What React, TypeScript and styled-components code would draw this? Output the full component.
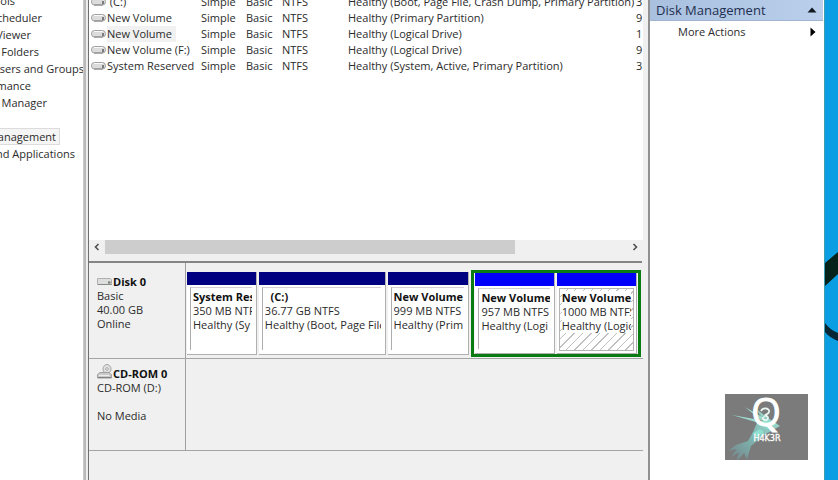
import React from "react";
import styled, { createGlobalStyle, css } from "styled-components";

const Global = createGlobalStyle`
  * { box-sizing: border-box; }
  html, body, #root { height: 100%; }
  body {
    margin: 0;
    overflow: hidden;
    background: #f0f0f0;
    color: #2b2b2b;
    font: 11px/14px "Open Sans", "Noto Sans", sans-serif;
  }
  button { font: inherit; color: inherit; background: none; border: 0; padding: 0; margin: 0; text-align: left; }
`;

const Screen = styled.div`
  display: flex;
  height: 100vh;
  min-height: 480px;
`;

const Tree = styled.nav`
  flex: 0 0 84px;
  display: flex;
  flex-direction: column;
  background: #fff;
  overflow: hidden;
  border-right: 1px solid #c9c9c9;
  white-space: nowrap;
`;

const TreeItem = styled.button<{ $end: number; $first?: boolean; $selected?: boolean }>`
  display: flex;
  flex: none;
  align-items: ${(p) => (p.$first ? "flex-end" : "center")};
  justify-content: flex-end;
  width: ${(p) => p.$end}px;
  height: ${(p) => (p.$first ? 9 : 17)}px;
  line-height: 16px;
  white-space: nowrap;
  ${(p) =>
    p.$selected &&
    css`
      padding-right: 3px;
      background: #f5f5f5;
      border: 1px solid #dcdcdc;
      border-left: 0;
    `}
`;

const Splitter = styled.div`
  flex: 0 0 5px;
  background: #ececec;
  border-left: 2px solid #b9b9b9;
  border-right: 1px solid #707070;
`;

const Center = styled.main`
  flex: 1 1 0;
  min-width: 0;
  display: flex;
  flex-direction: column;
  padding-right: 5px;
`;

const VolumeList = styled.section`
  flex: 0 0 240px;
  background: #fff;
  overflow: hidden;
  display: flex;
  flex-direction: column;
`;

const VolumeTable = styled.table`
  width: 100%;
  table-layout: fixed;
  border-collapse: collapse;
  margin-top: -6px;
  td {
    height: 16px;
    padding: 0;
    line-height: 16px;
    white-space: nowrap;
    overflow: hidden;
  }
`;

const Col = styled.col<{ $w?: number }>`
  ${(p) => p.$w && `width: ${p.$w}px;`}
`;

const VolumeName = styled.span<{ $selected?: boolean }>`
  display: flex;
  align-items: center;
  gap: 1px;
  padding-left: 2px;
  white-space: pre;
  span {
    padding-right: 4px;
    background: ${(p) => (p.$selected ? "#f1f1f1" : "transparent")};
  }
`;

const ScrollBar = styled.div`
  flex: 0 0 14px;
  display: flex;
  background: #f0f0f0;
`;

const ScrollButton = styled.button`
  flex: 0 0 16px;
  display: flex;
  align-items: center;
  justify-content: center;
`;

const Track = styled.div`
  flex: 1;
`;

const Thumb = styled.div`
  width: 78.5%;
  height: 14px;
  background: #cdcdcd;
`;

const Divider = styled.div`
  flex: 0 0 9px;
  margin-right: 1px;
  border-bottom: 2px solid #858585;
`;

const DiskRow = styled.section<{ $h: number }>`
  display: flex;
  flex: 0 0 ${(p) => p.$h}px;
  border-bottom: 1px solid #a5a5a5;
`;

const DiskLabel = styled.div`
  flex: 0 0 97px;
  border-right: 1px solid #a0a0a0;
  padding: 0 8px 27px;
  display: flex;
  flex-direction: column;
  justify-content: flex-end;
  white-space: pre;
`;

const DiskTitle = styled.strong`
  display: flex;
  align-items: flex-end;
  gap: 1px;
  height: 16px;
  color: #111;
  svg { margin-bottom: 2px; }
`;

const Partitions = styled.div`
  flex: 1;
  min-width: 0;
  display: flex;
  align-items: stretch;
  gap: 2px;
  padding: 7px 2px 1px 1px;
`;

const Extended = styled.div`
  flex: 162 1 0;
  min-width: 0;
  display: flex;
  gap: 2px;
  border: 3px solid #0a7a12;
  padding: 0 1px;
  background: #f4f4f4;
`;

const Part = styled.div<{ $grow: number; $primary?: boolean }>`
  flex: ${(p) => p.$grow} 1 0;
  min-width: 0;
  display: flex;
  flex-direction: column;
  border-right: 1px solid #b0b0b0;
  border-bottom: 1px solid #b0b0b0;
  margin: ${(p) => (p.$primary ? "2px 0" : "0")};
  background: #fff;
`;

const Band = styled.div<{ $primary?: boolean }>`
  flex: 0 0 13px;
  background: ${(p) => (p.$primary ? "#000080" : "#0000fa")};
`;

const Body = styled.div<{ $hatched?: boolean }>`
  flex: 1;
  margin: 2px 4px 4px 3px;
  padding: 2px 0 0 2px;
  border-left: 1px solid #adadad;
  border-top: 1px solid #d0d0d0;
  overflow: hidden;
  white-space: pre;
  ${(p) =>
    p.$hatched &&
    css`
      margin: 2px 2px 2px 2px;
      border: 1px solid #b4b4b4;
      background: repeating-linear-gradient(135deg, #fff 0 5px, #c0c0c0 5px 6px);
    `}
  strong, span {
    display: block;
    overflow: hidden;
    margin-right: ${(p) => (p.$hatched ? 2 : 0)}px;
    background: #fff;
  }
  strong { color: #111; }
`;

const Actions = styled.aside`
  flex: 0 0 176px;
  background: #fff;
  border-left: 2px solid #919191;
  display: flex;
  flex-direction: column;
`;

const ActionsHeader = styled.button`
  display: flex;
  align-items: center;
  justify-content: space-between;
  height: 21px;
  margin-right: 1px;
  padding: 0 6px 0 6px;
  font-size: 13px;
  line-height: 20px;
  color: #1e2f50;
  background: linear-gradient(90deg, #a9c0df, #b9cfeb);
  border-bottom: 1px solid #a2b6d2;
`;

const ActionItem = styled.button`
  display: flex;
  align-items: center;
  justify-content: space-between;
  height: 22px;
  padding: 0 8px 0 28px;
`;

const Watermark = styled.div`
  margin: auto 16px 20px auto;
  width: 83px;
  height: 66px;
  svg { display: block; }
`;

const Desktop = styled.div`
  flex: 0 0 14px;
  background: #0b9ee3;
  border-left: 1px solid #3b9dad;
  padding-top: 248px;
  svg { display: block; }
`;

const DriveIcon = () => (
  <svg width="15" height="10" viewBox="0 0 15 10" aria-hidden="true">
    <rect x="0.500" y="1.500" width="14" height="6.500" rx="3" fill="#dcdcdc" stroke="#a2a2a2" />
    <path d="M3 2.500h9" stroke="#f7f7f7" />
    <path d="M3 8h9" stroke="#858585" />
    <rect x="11" y="4" width="2" height="3" fill="#7c7c7c" />
  </svg>
);

const DiskIcon = () => (
  <svg width="15" height="10" viewBox="0 0 15 10" aria-hidden="true">
    <path d="M.5 1.500h13l1 1v5H.5z" fill="#dedede" stroke="#b0b0b0" />
    <path d="M1 7.500h13.500" stroke="#888" />
    <path d="M11 5.500h2.500" stroke="#6c7a6c" strokeWidth="2" />
  </svg>
);

const CdIcon = () => (
  <svg width="15" height="15" viewBox="0 0 15 15" aria-hidden="true">
    <ellipse cx="10" cy="5" rx="4" ry="4.500" fill="#e0e0e0" stroke="#a4a4a4" />
    <circle cx="10" cy="5" r="1.300" fill="#fff" stroke="#a4a4a4" />
    <path d="M3 8.500h9l2.500 2v3.500H.5v-3.500z" fill="#cbcbcb" stroke="#a0a0a0" />
    <path d="M2 11.500h10" stroke="#ededed" />
    <path d="M1 13.500h13" stroke="#808080" />
  </svg>
);

const Chevron = ({ d }: { d: string }) => (
  <svg width="8" height="8" viewBox="0 0 8 8" aria-hidden="true">
    <path d={d} fill="none" stroke="#505050" strokeWidth="1.600" />
  </svg>
);

const treeItems = [
  { label: "ols", end: 15 },
  { label: "cheduler", end: 42 },
  { label: "Viewer", end: 31 },
  { label: "l Folders", end: 39 },
  { label: "Users and Groups", end: 84 },
  { label: "mance", end: 31 },
  { label: "Manager", end: 47 },
  { label: "", end: 47 },
  { label: "anagement", end: 60, selected: true },
  { label: "nd Applications", end: 75 },
];

const volumes = [
  { name: " (C:)", status: "Healthy (Boot, Page File, Crash Dump, Primary Partition)", size: "3" },
  { name: "New Volume", status: "Healthy (Primary Partition)", size: "9" },
  { name: "New Volume", status: "Healthy (Logical Drive)", size: "1", selected: true },
  { name: "New Volume (F:)", status: "Healthy (Logical Drive)", size: "9" },
  { name: "System Reserved", status: "Healthy (System, Active, Primary Partition)", size: "3" },
];

type PartitionProps = {
  grow: number;
  name: string;
  size: string;
  status: string;
  primary?: boolean;
  hatched?: boolean;
};

const Partition = ({ grow, name, size, status, primary, hatched }: PartitionProps) => (
  <Part $grow={grow} $primary={primary}>
    <Band $primary={primary} />
    <Body $hatched={hatched}>
      <strong>{name}</strong>
      <span>{size}</span>
      <span>{status}</span>
    </Body>
  </Part>
);

export default function App() {
  return (
    <Screen>
      <Global />
      <Tree aria-label="Console tree">
        {treeItems.map((t, i) => (
          <TreeItem key={i} $end={t.end} $first={i === 0} $selected={t.selected}>
            {t.label}
          </TreeItem>
        ))}
      </Tree>
      <Splitter />
      <Center>
        <VolumeList>
          <VolumeTable>
            <colgroup>
              <Col $w={112} />
              <Col $w={45} />
              <Col $w={36} />
              <Col $w={66} />
              <Col />
              <Col $w={7} />
            </colgroup>
            <tbody>
              {volumes.map((v, i) => (
                <tr key={i}>
                  <td>
                    <VolumeName $selected={v.selected}>
                      <DriveIcon />
                      <span>{v.name}</span>
                    </VolumeName>
                  </td>
                  <td>Simple</td>
                  <td>Basic</td>
                  <td>NTFS</td>
                  <td>{v.status}</td>
                  <td>{v.size}</td>
                </tr>
              ))}
            </tbody>
          </VolumeTable>
        </VolumeList>
        <ScrollBar>
          <ScrollButton aria-label="Scroll left">
            <Chevron d="M5.500 1L2.500 4l3 3" />
          </ScrollButton>
          <Track>
            <Thumb />
          </Track>
          <ScrollButton aria-label="Scroll right">
            <Chevron d="M2.500 1l3 3-3 3" />
          </ScrollButton>
        </ScrollBar>
        <Divider />
        <DiskRow $h={96}>
          <DiskLabel>
            <DiskTitle>
              <DiskIcon />
              Disk 0
            </DiskTitle>
            <span>Basic</span>
            <span>40.00 GB</span>
            <span>Online</span>
          </DiskLabel>
          <Partitions>
            <Partition primary grow={69} name="System Res" size="350 MB NTF" status="Healthy (Sy" />
            <Partition primary grow={126} name="  (C:)" size="36.77 GB NTFS" status="Healthy (Boot, Page File" />
            <Partition primary grow={81} name="New Volume" size="999 MB NTFS" status="Healthy (Prim" />
            <Extended>
              <Partition grow={79} name="New Volume" size="957 MB NTFS" status="Healthy (Logi" />
              <Partition grow={80} hatched name="New Volume" size="1000 MB NTFS" status="Healthy (Logic" />
            </Extended>
          </Partitions>
        </DiskRow>
        <DiskRow $h={92}>
          <DiskLabel>
            <DiskTitle>
              <CdIcon />
              CD-ROM 0
            </DiskTitle>
            <span>CD-ROM (D:)</span>
            <span> </span>
            <span>No Media</span>
          </DiskLabel>
        </DiskRow>
      </Center>
      <Actions>
        <ActionsHeader>
          Disk Management
          <svg width="10" height="6" viewBox="0 0 10 6" aria-hidden="true">
            <path d="M5 0.500L9.500 5.500h-9z" fill="#101820" />
          </svg>
        </ActionsHeader>
        <ActionItem>
          More Actions
          <svg width="6" height="10" viewBox="0 0 6 10" aria-hidden="true">
            <path d="M0.500 0.500L5.500 5l-5 4.500z" fill="#000" />
          </svg>
        </ActionItem>
        <Watermark>
          <svg width="83" height="66" viewBox="0 0 83 66" role="img" aria-label="Q H4K3R">
            <defs>
              <linearGradient id="hand" x1="1" y1="0" x2="0" y2="1">
                <stop offset="0" stopColor="#a5ded2" />
                <stop offset="0.500" stopColor="#7fbab3" />
                <stop offset="1" stopColor="#748088" />
              </linearGradient>
            </defs>
            <rect width="83" height="66" fill="#7b7b7b" />
            <path
              d="M55 32l-9-6-15-11 8 12-7 2-4 9-5 9-12 4-8 6 9-2-7 9 9-6-3 10 8-9 3 6 4-13 13-11z"
              fill="url(#hand)"
            />
            <path d="M7 21l28 5-1 3zM20 13l19 11-2 3z" fill="#9bd8cc" />
            <path d="M33 29l8-4 11 5-9 5zM28 39l7-4 4 3-7 5z" fill="#8fe0d0" />
            <text x="41" y="32" textAnchor="middle" fontFamily="Open Sans, sans-serif" fontSize="38" fill="#fff" stroke="#fff">
              Q
            </text>
            <path d="M36 17c2-4 9-3 8 1-1 3-4 2-4 4 4-1 4 5 0 4-2 0-3-2-1-3" fill="none" stroke="#eaf7f3" strokeWidth="1.800" />
            <text x="42" y="47" textAnchor="middle" fontFamily="DejaVu Sans, sans-serif" fontSize="8" fill="#fff" stroke="#fff" strokeWidth="0.300">
              H4K3R
            </text>
          </svg>
        </Watermark>
      </Actions>
      <Desktop>
        <svg width="13" height="96" viewBox="0 0 13 96" aria-hidden="true">
          <path d="M0 15L13 4v22L0 38z" fill="#06231b" />
          <path d="M0 75q5 7 13 10v8Q5 90 0 84z" fill="#072735" />
        </svg>
      </Desktop>
    </Screen>
  );
}
